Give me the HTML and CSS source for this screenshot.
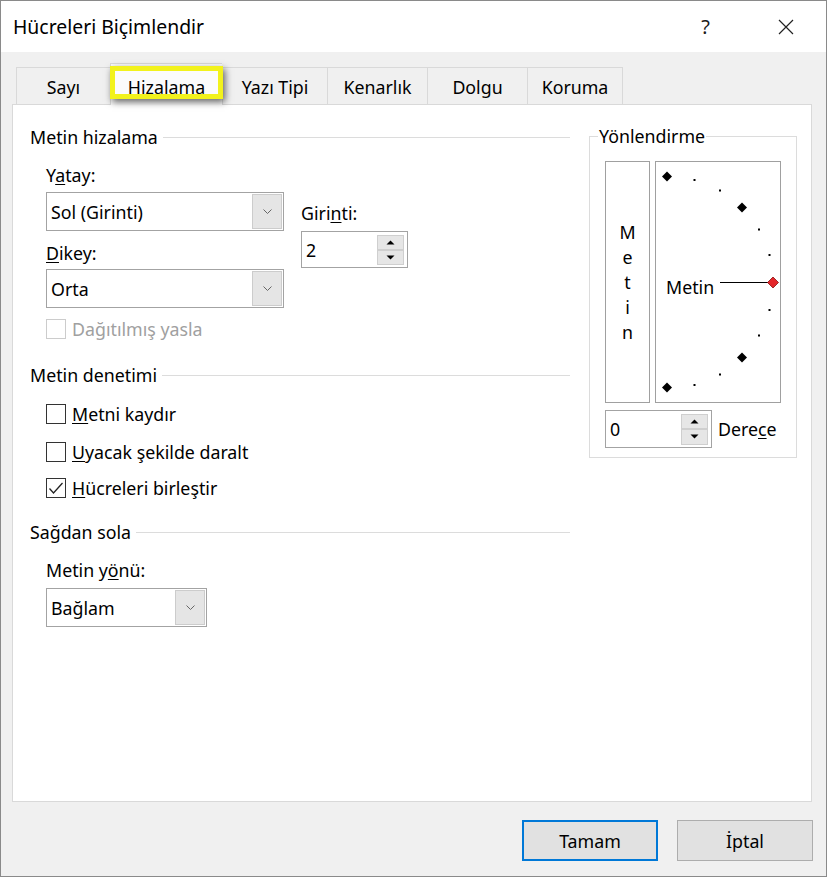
FILE: index.html
```html
<!DOCTYPE html>
<html lang="tr">
<head>
<meta charset="utf-8">
<title>Hücreleri Biçimlendir</title>
<link rel="stylesheet" href="styles.css">
</head>
<body>
<div class="window">
  <div class="titlebar">
    <div class="title">Hücreleri Biçimlendir</div>
    <div class="help">?</div>
    <div class="close">
      <svg width="16" height="16" viewBox="0 0 16 16"><path d="M1 1 L15 15 M15 1 L1 15" stroke="#222" stroke-width="1.2" fill="none"/></svg>
    </div>
  </div>
  <div class="client">
    <div class="tabs">
      <div class="tab w-sayi">Sayı</div>
      <div class="tab active w-hiz"><span class="hl"></span><span class="tab-text">Hizalama</span></div>
      <div class="tab w-yazi">Yazı Tipi</div>
      <div class="tab w-ken">Kenarlık</div>
      <div class="tab w-dol">Dolgu</div>
      <div class="tab last w-kor">Koruma</div>
    </div>
    <div class="panel">
      <div class="left">
        <div class="section"><span>Metin hizalama</span><i class="rule"></i></div>
        <div class="align-row">
          <div class="align-main">
            <div class="lbl">Y<u>a</u>tay:</div>
            <div class="combo wide c-first">
              <span class="combo-val">Sol (Girinti)</span>
              <span class="combo-btn"><svg width="9" height="5" viewBox="0 0 9 5"><polyline points="0.5,0.5 4.5,4.5 8.5,0.5" fill="none" stroke="#666" stroke-width="1"/></svg></span>
            </div>
            <div class="lbl l-dikey"><u>D</u>ikey:</div>
            <div class="combo wide c-second">
              <span class="combo-val">Orta</span>
              <span class="combo-btn"><svg width="9" height="5" viewBox="0 0 9 5"><polyline points="0.5,0.5 4.5,4.5 8.5,0.5" fill="none" stroke="#666" stroke-width="1"/></svg></span>
            </div>
          </div>
          <div class="align-indent">
            <div class="lbl l-girinti">Giri<u>n</u>ti:</div>
            <div class="spin s-girinti">
              <span class="spin-val">2</span>
              <span class="spin-btns">
                <span class="spin-b"><svg width="9" height="5" viewBox="0 0 9 5"><polygon points="0.5,4.5 4.5,0.5 8.5,4.5" fill="#000"/></svg></span>
                <span class="spin-b"><svg width="9" height="5" viewBox="0 0 9 5"><polygon points="0.5,0.5 4.5,4.5 8.5,0.5" fill="#000"/></svg></span>
              </span>
            </div>
          </div>
        </div>
        <div class="check disabled ch-dist"><span class="box"></span><span>Dağıtılmış yasla</span></div>

        <div class="section s-denetim"><span>Metin denetimi</span><i class="rule"></i></div>
        <div class="check ch-1"><span class="box"></span><span><u>M</u>etni kaydır</span></div>
        <div class="check ch-2"><span class="box"></span><span><u>U</u>yacak şekilde daralt</span></div>
        <div class="check ch-3"><span class="box"><svg width="18" height="18" viewBox="0 0 18 18"><polyline points="2.5,9.5 6.5,14 15.5,4" fill="none" stroke="#222" stroke-width="1.3"/></svg></span><span><u>H</u>ücreleri birleştir</span></div>

        <div class="section s-sag"><span>Sağdan sola</span><i class="rule"></i></div>
        <div class="lbl indent l-yonu">Metin y<u>ö</u>nü:</div>
        <div class="combo narrow indent c-third">
          <span class="combo-val">Bağlam</span>
          <span class="combo-btn"><svg width="9" height="5" viewBox="0 0 9 5"><polyline points="0.5,0.5 4.5,4.5 8.5,0.5" fill="none" stroke="#666" stroke-width="1"/></svg></span>
        </div>
      </div>

      <fieldset class="orient">
        <legend>Yönlendirme</legend>
        <div class="orient-body">
          <div class="orient-row">
            <div class="vtext"><span>M</span><span>e</span><span>t</span><span>i</span><span>n</span></div>
            <div class="dial">
              <svg width="124" height="240" viewBox="656 162 124 240">
                <g fill="#000">
                  <polygon points="662,176.5 667,171.5 672,176.5 667,181.5"/>
                  <polygon points="737,207.5 742,202.5 747,207.5 742,212.5"/>
                  <polygon points="737,357.5 742,352.5 747,357.5 742,362.5"/>
                  <polygon points="662,387.5 667,382.5 672,387.5 667,392.5"/>
                  <rect x="693.5" y="179" width="2" height="2"/>
                  <rect x="719" y="189.5" width="2" height="2"/>
                  <rect x="758" y="228.5" width="2" height="2"/>
                  <rect x="768.5" y="254" width="2" height="2"/>
                  <rect x="768.5" y="309" width="2" height="2"/>
                  <rect x="758" y="334.5" width="2" height="2"/>
                  <rect x="719" y="373.5" width="2" height="2"/>
                  <rect x="693.5" y="384" width="2" height="2"/>
                </g>
                <line x1="720" y1="282.5" x2="768" y2="282.5" stroke="#000" stroke-width="1"/>
                <polygon points="767.5,282.5 773,277 778.5,282.5 773,288" fill="#e3262a" stroke="#8a1010" stroke-width="0.8"/>
                <text class="dial-text" x="666" y="294">Metin</text>
              </svg>
            </div>
          </div>
          <div class="deg-row">
            <div class="spin s-deg">
              <span class="spin-val">0</span>
              <span class="spin-btns">
                <span class="spin-b"><svg width="9" height="5" viewBox="0 0 9 5"><polygon points="0.5,4.5 4.5,0.5 8.5,4.5" fill="#000"/></svg></span>
                <span class="spin-b"><svg width="9" height="5" viewBox="0 0 9 5"><polygon points="0.5,0.5 4.5,4.5 8.5,0.5" fill="#000"/></svg></span>
              </span>
            </div>
            <span class="deg-lbl">Dere<u>c</u>e</span>
          </div>
        </div>
      </fieldset>
    </div>
    <div class="buttons">
      <button class="btn default">Tamam</button>
      <button class="btn">İptal</button>
    </div>
  </div>
</div>
</body>
</html>
```

FILE: styles.css
```css
* { box-sizing: border-box; }
html, body { margin: 0; padding: 0; background: #f0f0f0; }
body {
  font-family: "Noto Sans", "Open Sans", sans-serif;
  font-size: 17.8px;
  line-height: 22px;
  color: #000;
}
u { text-decoration-thickness: 1px; text-underline-offset: 2px; }

.window {
  width: 827px;
  height: 877px;
  border: 1px solid #8a8a8a;
  background: #f0f0f0;
  display: flex;
  flex-direction: column;
  overflow: hidden;
}

.titlebar {
  height: 51px;
  flex: none;
  background: #fff;
  display: flex;
  align-items: center;
  padding: 1px 0 0 12px;
}
.title { flex: 1; font-size: 19.4px; line-height: 28px; }
.help { font-size: 20px; line-height: 28px; margin-right: 68px; color: #1a1a1a; }
.close { width: 16px; height: 16px; margin-right: 32px; display: flex; }
.close svg { display: block; }

.client {
  flex: 1;
  display: flex;
  flex-direction: column;
  padding: 15px 0 0 11px;
}

.tabs {
  display: flex;
  height: 37px;
  margin-left: 4px;
  align-items: stretch;
}
.tab {
  border-top: 1px solid #d9d9d9;
  border-left: 1px solid #d9d9d9;
  background: #f0f0f0;
  display: flex;
  align-items: center;
  justify-content: center;
  padding-top: 2px;
}
.tab.last { border-right: 1px solid #d9d9d9; }
.tab.active {
  position: relative;
  z-index: 2;
  background: #fbfbfb;
  margin-top: -4px;
  margin-bottom: -1px;
  padding-top: 5px;
}
.tab-text { position: relative; }
.hl {
  position: absolute;
  left: -1px;
  top: 2px;
  width: 113px;
  height: 33px;
  border: 5px solid #f2f21c;
  box-shadow: 2px 3px 7px rgba(0, 0, 0, 0.6);
}
.w-sayi { width: 94px; }
.w-hiz { width: 112px; }
.w-yazi { width: 105px; }
.w-ken { width: 100px; }
.w-dol { width: 100px; }
.w-kor { width: 96px; }

.panel {
  position: relative;
  z-index: 1;
  width: 800px;
  height: 698px;
  flex: none;
  background: #fff;
  border: 1px solid #d9d9d9;
  display: flex;
  align-items: flex-start;
  gap: 19px;
  padding: 21px 0 0 17px;
}

.left { width: 540px; flex: none; display: flex; flex-direction: column; }

.section { display: flex; align-items: center; height: 22px; }
.section .rule { flex: 1; height: 1px; background: #dcdcdc; margin-left: 5px; }
.s-denetim { margin-top: 24px; }
.s-sag { margin-top: 22px; }

.lbl { height: 22px; }
.indent { margin-left: 16px; }

.align-row { display: flex; margin-top: 16px; margin-left: 16px; }
.align-main { width: 238px; display: flex; flex-direction: column; }
.align-indent { margin-left: 17px; display: flex; flex-direction: column; }
.c-first { margin-top: 6px; }
.l-dikey { margin-top: 11px; }
.c-second { margin-top: 5px; }
.l-girinti { margin-top: 38px; }
.s-girinti { margin-top: 7px; }
.l-yonu { margin-top: 16px; }
.c-third { margin-top: 7px; }

.combo {
  display: flex;
  align-items: stretch;
  height: 39px;
  border: 1px solid #a3a3a3;
  background: #fff;
  padding: 1px;
}
.combo.wide { width: 238px; }
.combo.narrow { width: 161px; }
.combo-val { flex: 1; display: flex; align-items: center; padding-left: 3px; }
.combo-btn {
  width: 30px;
  background: #e5e5e5;
  border: 1px solid #cccccc;
  display: flex;
  align-items: center;
  justify-content: center;
}
.combo-btn svg { display: block; }

.spin {
  display: flex;
  align-items: center;
  justify-content: space-between;
  width: 107px;
  border: 1px solid #a3a3a3;
  background: #fff;
  padding: 0 3px 0 4px;
}
.s-girinti { height: 37px; }
.s-deg { height: 38px; }
.spin-btns { display: flex; flex-direction: column; width: 27px; }
.spin-b {
  height: 15px;
  background: #e6e6e6;
  border: 1px solid #cfcfcf;
  display: flex;
  align-items: center;
  justify-content: center;
}
.s-deg .spin-b { height: 15.5px; }
.spin-b svg { display: block; }

.check { display: flex; align-items: center; height: 22px; gap: 6px; margin-left: 16px; }
.box {
  width: 20px;
  height: 20px;
  border: 1px solid #333;
  background: #fff;
  display: flex;
  align-items: center;
  justify-content: center;
}
.check.disabled { color: #a0a0a0; }
.check.disabled .box { border-color: #cccccc; }
.ch-dist { margin-top: 10px; }
.ch-1 { margin-top: 17px; }
.ch-2 { margin-top: 16px; }
.ch-3 { margin-top: 14px; }

.orient {
  margin: -1px 0 0 0;
  width: 208px;
  min-width: 0;
  border: 1px solid #dcdcdc;
  padding: 0 15px 9px 8px;
}
.orient legend { padding: 0 1px; line-height: 22px; }
.orient-body { margin: 14px 0 0 7px; }
.orient-row { display: flex; gap: 5px; }
.vtext {
  width: 45px;
  height: 242px;
  border: 1px solid #a0a0a0;
  display: flex;
  flex-direction: column;
  align-items: center;
  justify-content: center;
  line-height: 25px;
}
.dial { width: 126px; height: 242px; border: 1px solid #a0a0a0; }
.dial svg { display: block; }
.dial-text { font-family: "Noto Sans", "Open Sans", sans-serif; font-size: 17.8px; fill: #000; }

.deg-row { display: flex; align-items: center; gap: 6px; margin-top: 7px; }

.buttons {
  display: flex;
  justify-content: flex-end;
  gap: 19px;
  margin-top: 18px;
  padding-right: 13px;
}
.btn {
  width: 136px;
  height: 41px;
  font: inherit;
  color: #000;
  background: #e1e1e1;
  border: 1px solid #adadad;
  padding: 0;
}
.btn.default { border: 2px solid #0078d7; }
```
